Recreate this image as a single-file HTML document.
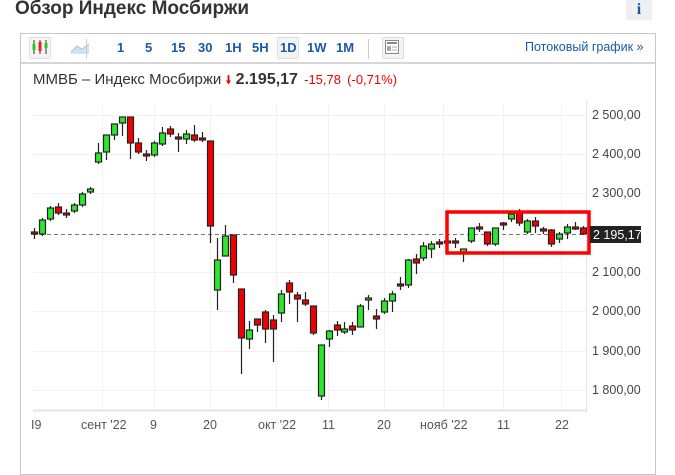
<!DOCTYPE html>
<html><head><meta charset="utf-8"><style>
body{margin:0;width:675px;height:449px;background:#fff;overflow:hidden;font-family:"Liberation Sans",Arial,sans-serif;position:relative}
.title{position:absolute;left:15px;top:-2px;font-size:19px;font-weight:bold;color:#333}
.info{position:absolute;left:626px;top:0;width:26px;height:20px;background:#eef0f3;color:#1a56a0;font-weight:bold;font-family:"Liberation Serif",serif;font-size:16px;text-align:center;line-height:20px}
.box{position:absolute;left:20px;top:33px;width:634px;height:440px;border:1px solid #c8c8c8}
.tb{position:absolute;left:0;top:0;width:634px;height:28px;border-bottom:2px solid #d6d6d6;background:#fff}
.tb span{position:absolute;top:6px;font-size:13px;font-weight:bold;color:#1a5aa8}
.sel{border:1px solid #ddd;background:#f4f4f4;border-radius:2px}
.head{position:absolute;left:33px;top:71px;font-size:15px;color:#333}
</style></head><body>
<div class="title">Обзор Индекс Мосбиржи</div>
<div class="info">i</div>
<div class="box">
<div class="tb">
 <div class="sel" style="position:absolute;left:8px;top:3px;width:20px;height:20px"></div>
 <svg style="position:absolute;left:10px;top:5px" width="18" height="16"><g stroke="#333" stroke-width="1"><line x1="3" y1="1" x2="3" y2="15"/><line x1="9" y1="1" x2="9" y2="15"/><line x1="15" y1="1" x2="15" y2="15"/></g><rect x="1.5" y="5" width="3" height="6" fill="#2c2"/><rect x="7.5" y="3" width="3" height="9" fill="#e22"/><rect x="13.5" y="4" width="3" height="5" fill="#2c2"/></svg>
 <svg style="position:absolute;left:49px;top:8px" width="20" height="12"><path d="M1 10 L7 4 L12 7 L19 2 L19 12 L1 12Z" fill="#d4e2f0"/><path d="M1 10 L7 4 L12 7 L19 2" fill="none" stroke="#a9c2dc"/></svg>
 <div style="position:absolute;left:65px;top:5px;width:1px;height:20px;background:#ccc"></div>
 <span style="left:96px">1</span><span style="left:124px">5</span><span style="left:150px">15</span><span style="left:177px">30</span><span style="left:204px">1H</span><span style="left:231px">5H</span>
 <div class="sel" style="position:absolute;left:256px;top:3px;width:20px;height:20px"></div>
 <span style="left:259px">1D</span><span style="left:286px">1W</span><span style="left:315px">1M</span>
 <div style="position:absolute;left:347px;top:5px;width:1px;height:20px;background:#ccc"></div>
 <div class="sel" style="position:absolute;left:361px;top:3px;width:20px;height:20px"></div>
 <svg style="position:absolute;left:364px;top:6px" width="14" height="14"><rect x="0.5" y="0.5" width="13" height="13" fill="#fff" stroke="#888"/><rect x="2" y="2" width="10" height="2" fill="#888"/><rect x="2" y="6" width="4" height="5" fill="#aaa"/><line x1="7" y1="7" x2="12" y2="7" stroke="#aaa"/><line x1="7" y1="10" x2="12" y2="10" stroke="#aaa"/></svg>
 <span style="left:504px;font-weight:normal;font-size:12.5px;top:6px">Потоковый график&nbsp;»</span>
</div>
</div>
<div class="head">ММВБ – Индекс Мосбиржи <span style="color:#e00;font-size:12px">&#129051;</span> <b style="font-size:16px">2.195,17</b> <span style="color:#e00;font-size:13px;margin-left:2px">-15,78</span> <span style="color:#e00;font-size:13px;margin-left:2px">(-0,71%)</span></div>
<svg style="position:absolute;left:0;top:0" width="675" height="449">
<g stroke="#f0f1f4" stroke-width="1">
<line x1="33" y1="115.5" x2="586" y2="115.5"/><line x1="33" y1="154.5" x2="586" y2="154.5"/><line x1="33" y1="193.5" x2="586" y2="193.5"/><line x1="33" y1="272.5" x2="586" y2="272.5"/><line x1="33" y1="311.5" x2="586" y2="311.5"/><line x1="33" y1="351.5" x2="586" y2="351.5"/><line x1="33" y1="390.5" x2="586" y2="390.5"/>
<line x1="102.5" y1="105" x2="102.5" y2="410"/><line x1="154.5" y1="105" x2="154.5" y2="410"/><line x1="210.5" y1="105" x2="210.5" y2="410"/><line x1="276.5" y1="105" x2="276.5" y2="410"/><line x1="328.5" y1="105" x2="328.5" y2="410"/><line x1="384.5" y1="105" x2="384.5" y2="410"/><line x1="443.5" y1="105" x2="443.5" y2="410"/><line x1="503.5" y1="105" x2="503.5" y2="410"/><line x1="561.5" y1="105" x2="561.5" y2="410"/>
</g>
<line x1="586.5" y1="100" x2="586.5" y2="412" stroke="#e2e4e8"/>
<line x1="33" y1="410.5" x2="586" y2="410.5" stroke="#e2e4e8" stroke-width="2"/>
<line x1="33" y1="234.5" x2="586" y2="234.5" stroke="#777" stroke-dasharray="4,3"/>
<g id="c" stroke="#222" stroke-width="1.2"></g>
<rect x="447" y="212" width="142" height="41" fill="none" stroke="#f00" stroke-width="3.5"/>
<rect x="590" y="226" width="51" height="17" fill="#222"/>
<text x="593" y="239" fill="#fff" font-size="12.5">2 195,17</text>
<g fill="#444" font-size="12.5">
<text x="592" y="119">2 500,00</text><text x="592" y="158">2 400,00</text><text x="592" y="197">2 300,00</text><text x="592" y="276">2 100,00</text><text x="592" y="315">2 000,00</text><text x="592" y="355">1 900,00</text><text x="592" y="394">1 800,00</text>
</g>
<g fill="#555" font-size="12.5">
<text x="31" y="429">I9</text><text x="81" y="429">сент '22</text><text x="150" y="429">9</text><text x="203" y="429">20</text><text x="258" y="429">окт '22</text><text x="322" y="429">11</text><text x="377" y="429">20</text><text x="420" y="429">нояб '22</text><text x="497" y="429">11</text><text x="555" y="429">22</text>
</g>
</svg>
<script>
var d=[[34,232,234,'r',228,239],[42,220,234,'g',218,236],[50,208,219,'g'],[58,207,213,'r',203,215],[66,213,215,'r',209,218],[74,205,211,'g'],[82,194,205,'g'],[90,189,192,'g',187,194],[98,153,162,'g',143,164],[106,135,152,'g',135,160],[114,124,135,'g',124,140],[122,117,123,'g',117,136],[130,117,143,'r',117,159],[138,143,152,'r',138,154],[146,154,156,'r',150,161],[154,143,155,'g'],[162,133,144,'g',127,146],[170,129,134,'r',126,137],[178,137,139,'r',133,152],[186,134,139,'g',130,144],[194,135,140,'r',125,142],[202,138,140,'r',132,142],[210,141,226,'r',141,243],[217,260,290,'g',238,310],[225,236,256,'g',225,256],[233,235,275,'r',235,283],[241,289,338,'r',289,374],[249,330,339,'g',321,349],[257,319,325,'r',319,332],[265,312,329,'r',310,343],[273,320,329,'r',315,362],[281,294,313,'g',290,322],[289,283,292,'r',280,304],[297,295,299,'r',292,322],[305,300,304,'r',292,306],[313,306,333,'r',306,335],[321,345,396,'g',345,400],[329,331,339,'g',330,347],[337,325,330,'r',321,336],[344,329,332,'g',322,334],[352,326,330,'r',322,335],[360,306,327,'g',304,327],[368,298,300,'g',295,310],[376,316,319,'r',309,329],[384,301,312,'g',298,314],[392,294,301,'g',291,312],[400,284,286,'r',277,290],[408,260,285,'g',259,288],[416,259,263,'r',254,274],[423,246,258,'g',242,261],[431,244,249,'g',241,258],[439,242,244,'r',239,248],[447,241,242,'r',239,246],[455,241,243,'r',238,248],[463,249,252,'g',249,262],[471,228,241,'g',228,243],[479,227,229,'r',223,232],[487,232,244,'r',232,246],[495,228,244,'g',228,246],[503,223,225,'r',222,230],[511,214,219,'g',211,222],[519,213,223,'r',209,226],[527,221,232,'g',219,234],[535,221,226,'r',217,233],[543,229,231,'r',227,234],[551,230,244,'r',229,247],[559,234,239,'g',232,243],[567,227,233,'g',224,239],[575,227,228,'r',222,230],[583,228,234,'r',226,235]];
var s='';d.forEach(function(c){var lo=c[4]||c[1]-2,hi=c[5]||c[2]+2;s+='<line x1="'+(c[0]+0.5)+'" y1="'+lo+'" x2="'+(c[0]+0.5)+'" y2="'+hi+'"/>';var h=Math.max(c[2]-c[1],2);s+='<rect x="'+(c[0]-2.5)+'" y="'+c[1]+'" width="6" height="'+h+'" fill="'+(c[3]=='g'?'#2ee62e':'#f00000')+'"/>';});
document.getElementById('c').innerHTML=s;
</script>
</body></html>
